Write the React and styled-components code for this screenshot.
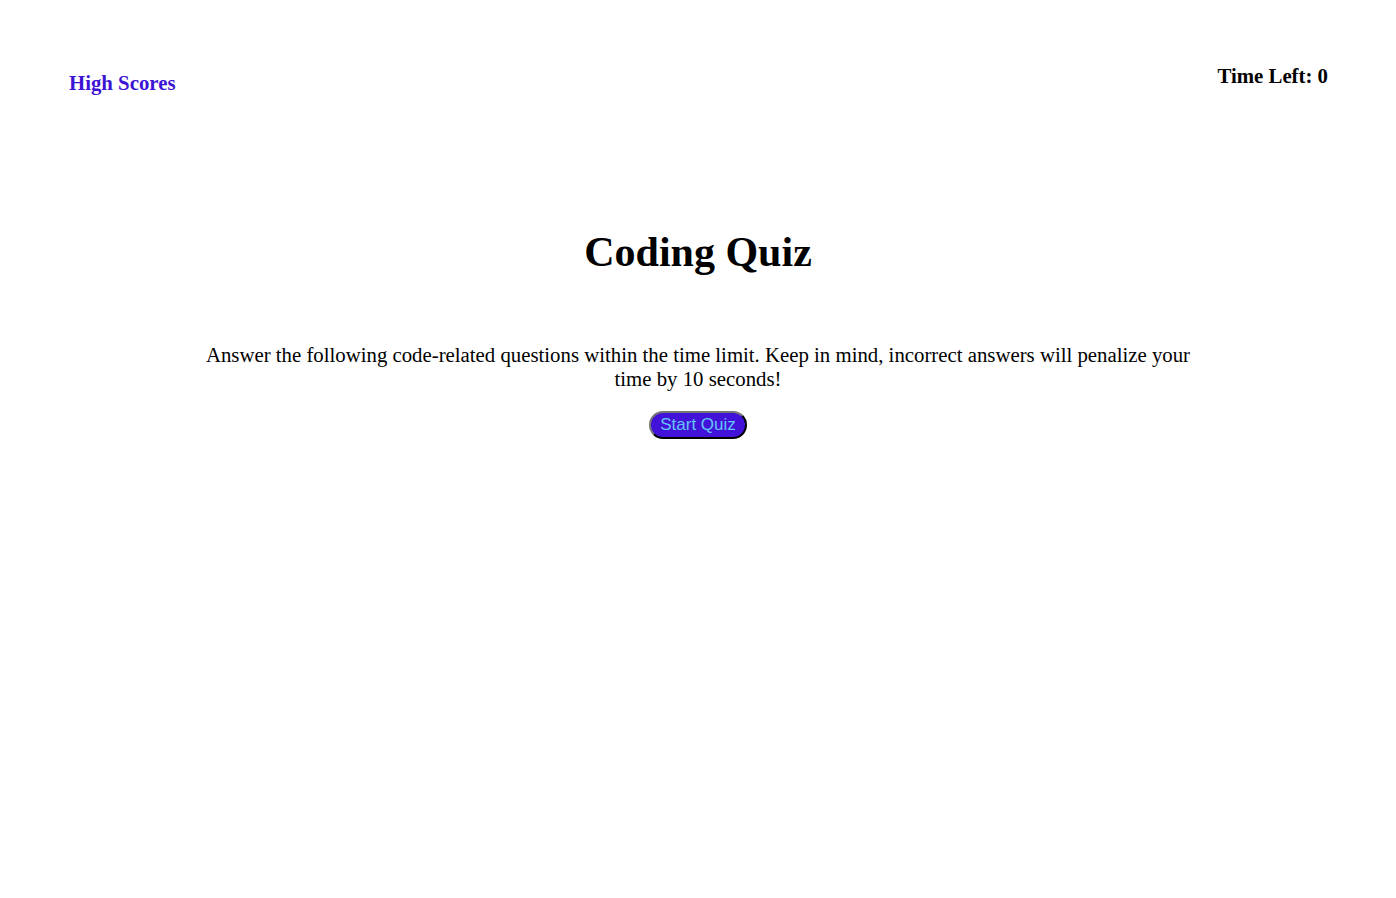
import styled, { createGlobalStyle } from 'styled-components';

const Global = createGlobalStyle`
  body {
    margin: 0;
    background: #fff;
    font-family: "Liberation Serif", "Times New Roman", serif;
    color: #000;
  }
`;

const Header = styled.header`
  display: flex;
  justify-content: space-between;
  align-items: flex-start;
  padding: 64px 68px 0 69px;
`;

const ScoresLink = styled.a`
  margin-top: 7px;
  font-size: 20.8px;
  font-weight: bold;
  color: #3d14d4;
  text-decoration: none;
  cursor: pointer;
`;

const Timer = styled.div`
  font-size: 20.8px;
  font-weight: bold;
`;

const Main = styled.main`
  display: flex;
  flex-direction: column;
  align-items: center;
  text-align: center;
`;

const Title = styled.h1`
  margin: 133px 0 0;
  font-size: 42px;
  font-weight: bold;
`;

const Intro = styled.p`
  max-width: 1000px;
  margin: 67px 0 0;
  font-size: 20.8px;
  line-height: 24px;
`;

const StartButton = styled.button`
  margin-top: 20px;
  height: 28px;
  padding: 0 9px;
  font-family: "Liberation Sans", Arial, sans-serif;
  font-size: 17px;
  color: #62c6f7;
  background: #4212d8;
  border: 2px outset #222;
  border-radius: 14px;
  cursor: pointer;
`;

export default function App() {
  return (
    <>
      <Global />
      <Header>
        <ScoresLink>High Scores</ScoresLink>
        <Timer>Time Left: 0</Timer>
      </Header>
      <Main>
        <Title>Coding Quiz</Title>
        <Intro>
          Answer the following code-related questions within the time limit. Keep in mind, incorrect answers will penalize your time by 10 seconds!
        </Intro>
        <StartButton>Start Quiz</StartButton>
      </Main>
    </>
  );
}
